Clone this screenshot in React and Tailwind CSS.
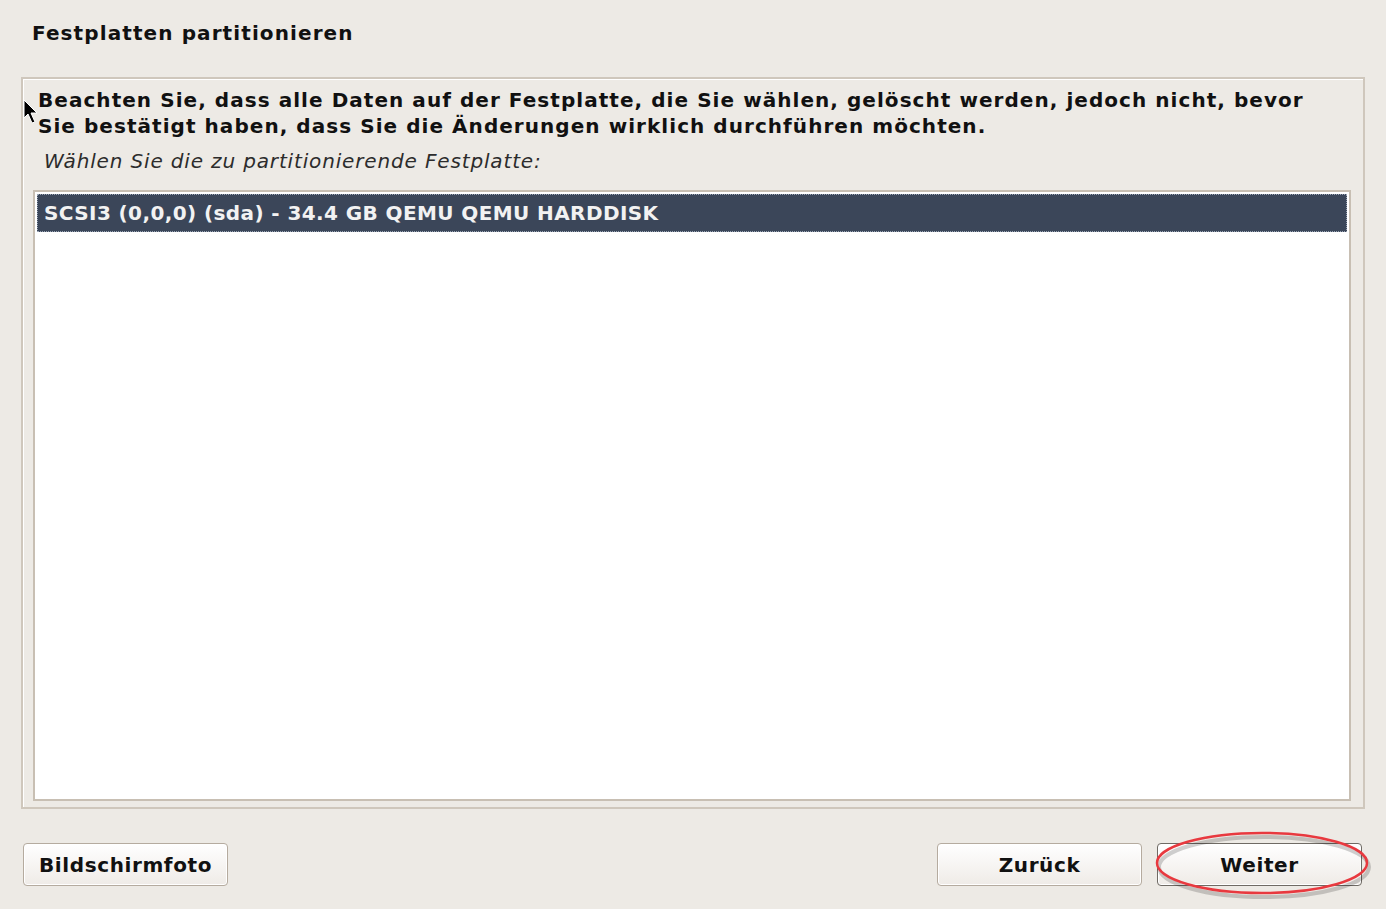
import React from 'react';

function Button({ label, primary = false }) {
  return (
    <button
      className={`h-[43px] w-[205px] rounded-[4px] border bg-gradient-to-b from-white to-[#efebe7] text-[20px] font-bold tracking-[0.6px] text-[#111] shadow-[inset_0_0_0_1px_#ffffff] ${
        primary ? 'border-[#6f6a64]' : 'border-[#b5ab9f]'
      }`}
    >
      {label}
    </button>
  );
}

export default function App() {
  return (
    <div
      className="relative flex h-[909px] w-[1386px] flex-col bg-[#edeae5] text-[#111]"
      style={{ fontFamily: '"DejaVu Sans", "Liberation Sans", sans-serif' }}
    >
      <h1 className="pl-[32px] pt-[20px] text-[20px] font-bold leading-[26px] tracking-[1.1px]">
        Festplatten partitionieren
      </h1>

      <div className="mx-[21px] mt-[31px] flex h-[732px] flex-col border-2 border-[#cfc7bc] shadow-[inset_1px_1px_0_#ffffff]">
        <p className="pl-[15px] pr-[20px] pt-[8px] text-[20px] font-bold leading-[26px] tracking-[1.05px]">
          Beachten Sie, dass alle Daten auf der Festplatte, die Sie wählen, gelöscht werden, jedoch nicht, bevor
          <br />
          Sie bestätigt haben, dass Sie die Änderungen wirklich durchführen möchten.
        </p>
        <p className="pl-[21px] pt-[9px] text-[20px] italic leading-[26px] tracking-[0.85px] text-[#2c2c2c]">
          Wählen Sie die zu partitionierende Festplatte:
        </p>
        <div className="mb-[6px] ml-[10px] mr-[12px] mt-[16px] flex-1 border-2 border-[#c8bfb3] bg-white p-[2px]">
          <div className="flex h-[38px] items-center border border-dotted border-[#9aa4b4] bg-[#3b4659] pl-[6px] text-[20px] font-bold tracking-[0.4px] text-[#f2f2f2]">
            SCSI3 (0,0,0) (sda) - 34.4 GB QEMU QEMU HARDDISK
          </div>
        </div>
      </div>

      <div className="flex items-center pl-[23px] pr-[24px] pt-[34px]">
        <Button label="Bildschirmfoto" />
        <div className="flex-1" />
        <div className="flex gap-[15px]">
          <Button label="Zurück" />
          <Button label="Weiter" primary />
        </div>
      </div>

      <svg
        className="pointer-events-none absolute left-[1150px] top-[829px]"
        width="224"
        height="70"
        viewBox="0 0 224 70"
      >
        <ellipse cx="113" cy="35" rx="105" ry="30" fill="none" stroke="#000" strokeOpacity="0.18" strokeWidth="4" transform="translate(1 3)" />
        <ellipse cx="112" cy="34" rx="105" ry="30" fill="none" stroke="#e8393f" strokeWidth="2.5" />
      </svg>

      <svg className="pointer-events-none absolute left-[23px] top-[99px]" width="16" height="26" viewBox="0 0 16 26">
        <path d="M1 1 L1 19 L5 15 L9 24 L12 23 L8 14 L14 14 Z" fill="#000" stroke="#fff" strokeWidth="1" />
      </svg>
    </div>
  );
}
